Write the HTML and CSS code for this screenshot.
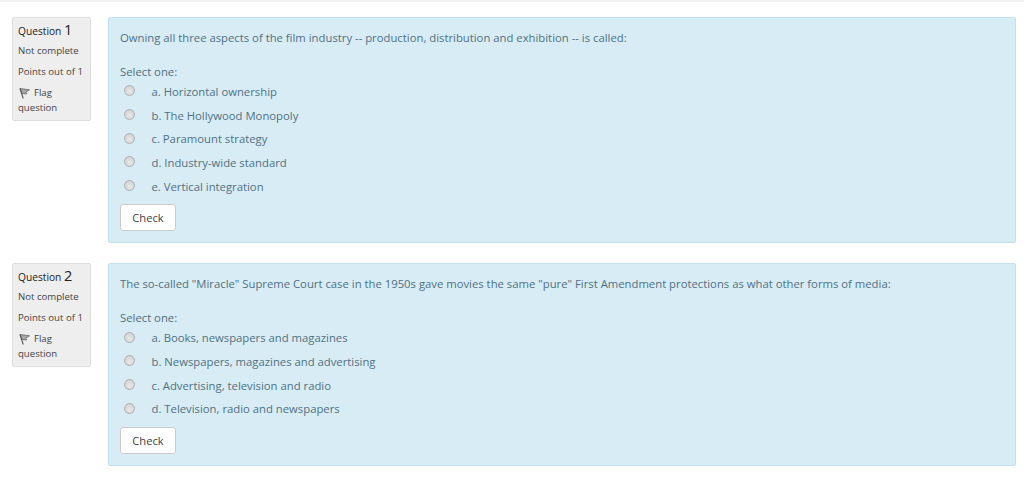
FILE: index.html
```html
<!DOCTYPE html>
<html lang="en">
<head>
<meta charset="utf-8">
<title>Quiz</title>
<link rel="stylesheet" href="styles.css">
</head>
<body>
<div class="topbar"></div>
<main class="quiz">
  <section class="que">
    <aside class="info">
      <h3 class="qno">Question <span class="num">1</span></h3>
      <div class="state">Not complete</div>
      <div class="grade">Points out of 1</div>
      <div class="flag"><svg class="flagicon" width="11" height="12" viewBox="0 0 11 12"><path d="M1 1.5 L10.5 2.8 L6.8 5 L7.6 7 L3.3 6.6 Z" fill="#a8a8a8" stroke="#666" stroke-width="0.8"/><path d="M1 1.5 L4.2 11.5" fill="none" stroke="#555" stroke-width="1.1"/></svg><span>Flag</span> question</div>
    </aside>
    <div class="content">
      <p class="qtext">Owning all three aspects of the film industry -- production, distribution and exhibition -- is called:</p>
      <div class="prompt">Select one:</div>
      <div class="answers">
        <div class="answer"><span class="radio"></span><span>a. Horizontal ownership</span></div>
        <div class="answer"><span class="radio"></span><span>b. The Hollywood Monopoly</span></div>
        <div class="answer"><span class="radio"></span><span>c. Paramount strategy</span></div>
        <div class="answer"><span class="radio"></span><span>d. Industry-wide standard</span></div>
        <div class="answer"><span class="radio"></span><span>e. Vertical integration</span></div>
      </div>
      <button class="check" type="button">Check</button>
    </div>
  </section>
  <section class="que">
    <aside class="info">
      <h3 class="qno">Question <span class="num">2</span></h3>
      <div class="state">Not complete</div>
      <div class="grade">Points out of 1</div>
      <div class="flag"><svg class="flagicon" width="11" height="12" viewBox="0 0 11 12"><path d="M1 1.5 L10.5 2.8 L6.8 5 L7.6 7 L3.3 6.6 Z" fill="#a8a8a8" stroke="#666" stroke-width="0.8"/><path d="M1 1.5 L4.2 11.5" fill="none" stroke="#555" stroke-width="1.1"/></svg><span>Flag</span> question</div>
    </aside>
    <div class="content">
      <p class="qtext">The so-called "Miracle" Supreme Court case in the 1950s gave movies the same "pure" First Amendment protections as what other forms of media:</p>
      <div class="prompt">Select one:</div>
      <div class="answers">
        <div class="answer"><span class="radio"></span><span>a. Books, newspapers and magazines</span></div>
        <div class="answer"><span class="radio"></span><span>b. Newspapers, magazines and advertising</span></div>
        <div class="answer"><span class="radio"></span><span>c. Advertising, television and radio</span></div>
        <div class="answer"><span class="radio"></span><span>d. Television, radio and newspapers</span></div>
      </div>
      <button class="check" type="button">Check</button>
    </div>
  </section>
</main>
</body>
</html>
```
FILE: styles.css
```css
html, body {
  margin: 0;
  padding: 0;
  background: #fff;
  font-family: "Open Sans", "DejaVu Sans", sans-serif;
}
.topbar {
  height: 2px;
  background: #f3f3f3;
}
.quiz {
  display: flex;
  flex-direction: column;
  gap: 20px;
  padding: 15px 8px 0 12px;
}
.que {
  display: flex;
  align-items: flex-start;
  gap: 17px;
}
.info {
  box-sizing: border-box;
  width: 79px;
  height: 104px;
  flex: none;
  padding: 3px 5px 0;
  background: #eeeeee;
  border: 1px solid #dfdfdf;
  border-radius: 2px;
  color: #444;
  font-size: 9.6px;
}
.qno {
  margin: 0;
  font-size: 10.2px;
  font-weight: 400;
  line-height: 17px;
  color: #222;
}
.num {
  font-size: 14.5px;
}
.state {
  margin-top: 3.5px;
  line-height: 14px;
}
.grade {
  margin-top: 7.5px;
  line-height: 14px;
}
.flag {
  margin-top: 6px;
  line-height: 15px;
}
.flagicon {
  vertical-align: -3px;
  margin: 0 4px 0 1px;
}
.content {
  box-sizing: border-box;
  flex: 1;
  padding: 11px;
  background: #d8ecf6;
  border: 1px solid #c3e0ef;
  border-radius: 2px;
  color: #4f7183;
  font-size: 11.3px;
}
.qtext {
  margin: 0;
  line-height: 18px;
  height: 34px;
}
.prompt {
  line-height: 17px;
  color: #4f6e7e;
}
.answers {
  display: flex;
  flex-direction: column;
}
.answer {
  display: flex;
  align-items: center;
  height: 23.7px;
  line-height: 18px;
}
.radio {
  box-sizing: border-box;
  flex: none;
  width: 11px;
  height: 11px;
  margin: -2px 16.5px 0 4px;
  border: 1px solid #b0b0b0;
  border-radius: 50%;
  background: radial-gradient(circle at 50% 60%, #e9e9e9, #cbcbcb);
}
.check {
  display: block;
  box-sizing: border-box;
  width: 56px;
  height: 27px;
  margin-top: 6px;
  padding: 0;
  background: #fff;
  border: 1px solid #cccccc;
  border-radius: 3px;
  color: #444;
  font-family: inherit;
  font-size: 11.2px;
}
```
